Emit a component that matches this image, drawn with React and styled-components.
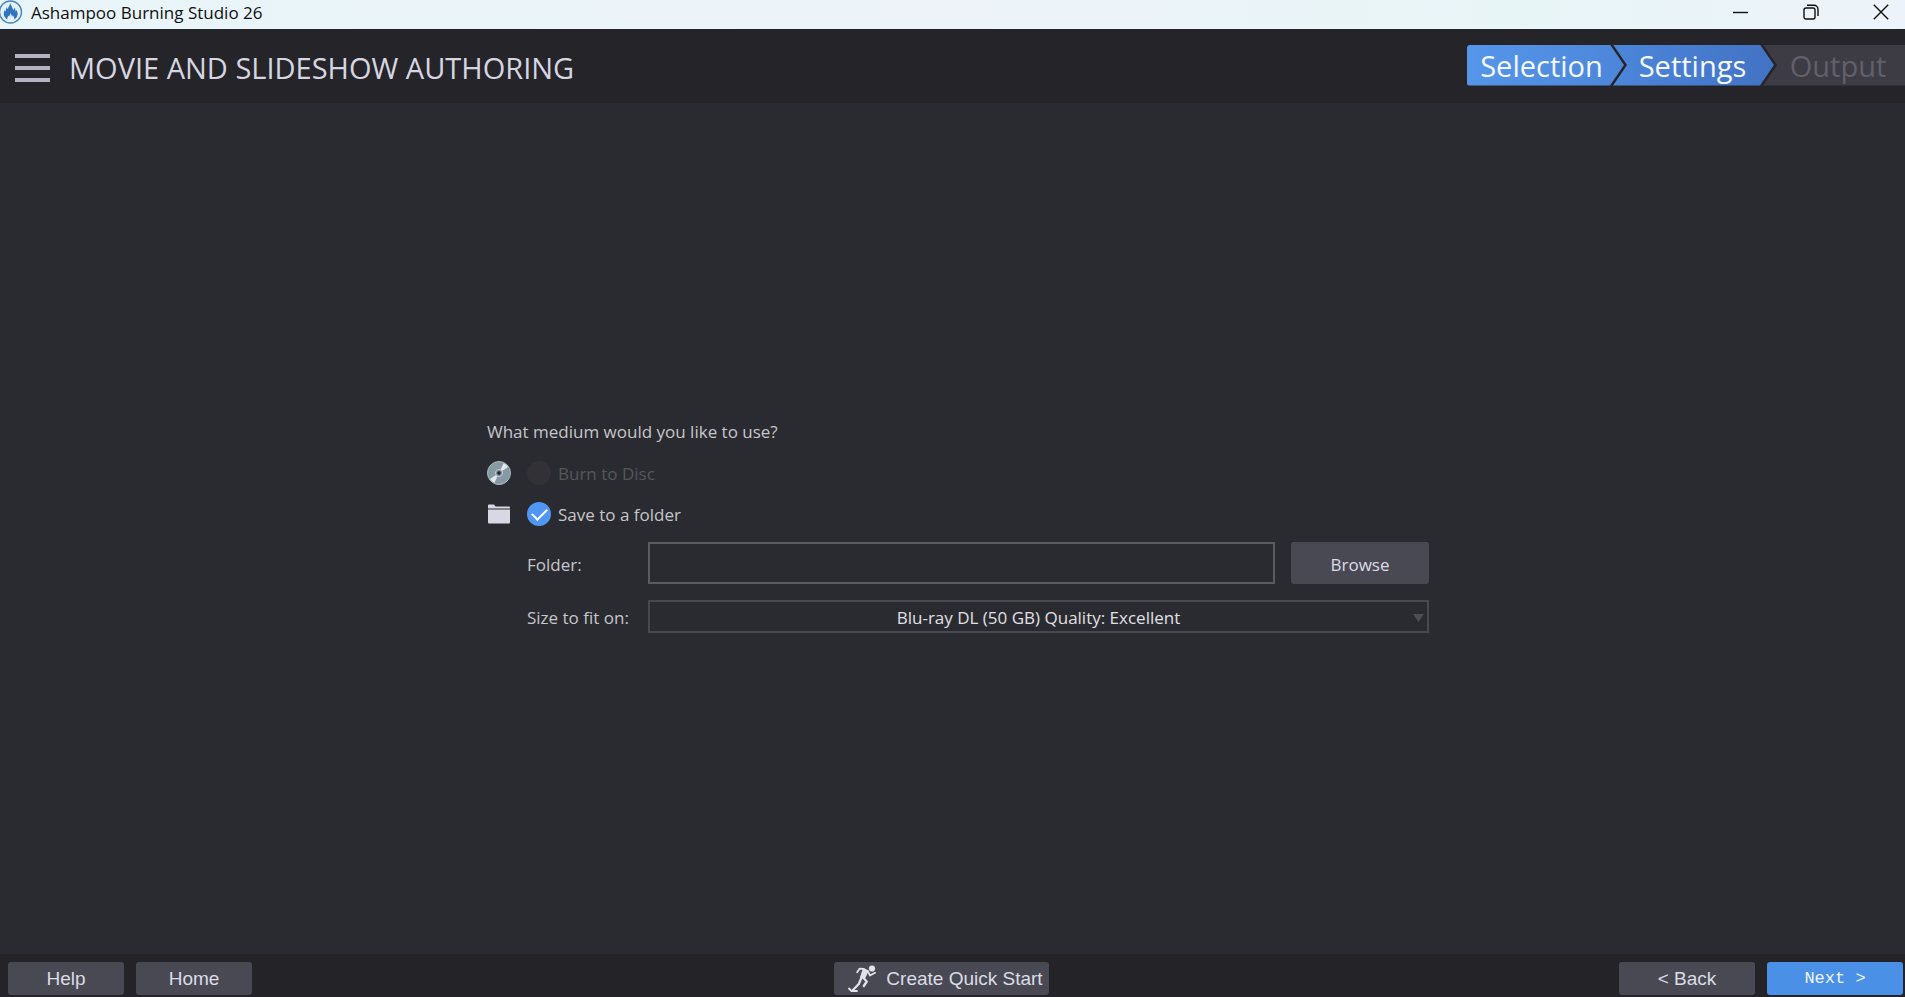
import React, { useState } from 'react';
import styled, { createGlobalStyle } from 'styled-components';

const App = () => {
  const [medium, setMedium] = useState('folder');
  const [folder, setFolder] = useState('');

  return (
    <Window>
      <GlobalStyle />
      <TitleBar>
        <AppName>
          <FlameLogo />
          <span>Ashampoo Burning Studio 26</span>
        </AppName>
        <WindowControls>
          <WindowButton aria-label="Minimize">
            <svg width="16" height="16" viewBox="0 0 16 16">
              <path d="M0 8.500h15" />
            </svg>
          </WindowButton>
          <WindowButton aria-label="Restore">
            <svg width="16" height="16" viewBox="0 0 16 16">
              <rect x="1" y="4" width="11" height="11" rx="2" />
              <path d="M4 1.200h7a4 4 0 0 1 4 4V12" />
            </svg>
          </WindowButton>
          <WindowButton aria-label="Close">
            <svg width="16" height="16" viewBox="0 0 16 16">
              <path d="M.8.8l14.400 14.400M15.200.8L.8 15.200" />
            </svg>
          </WindowButton>
        </WindowControls>
      </TitleBar>

      <Header>
        <MenuButton aria-label="Menu">
          <span />
          <span />
          <span />
        </MenuButton>
        <PageTitle>MOVIE AND SLIDESHOW AUTHORING</PageTitle>
        <Steps>
          <FirstStep>Selection</FirstStep>
          <MiddleStep>Settings</MiddleStep>
          <LastStep>Output</LastStep>
        </Steps>
      </Header>

      <Main>
        <Form onSubmit={(e) => e.preventDefault()}>
          <MediumGroup>
            <legend>What medium would you like to use?</legend>
            <MediumRow>
              <DiscIcon />
              <MediumLabel $disabled>
                <Radio
                  type="radio"
                  name="medium"
                  value="disc"
                  disabled
                  checked={medium === 'disc'}
                  onChange={() => setMedium('disc')}
                />
                <span>Burn to Disc</span>
              </MediumLabel>
            </MediumRow>
            <MediumRow>
              <FolderIcon />
              <MediumLabel>
                <Radio
                  type="radio"
                  name="medium"
                  value="folder"
                  checked={medium === 'folder'}
                  onChange={() => setMedium('folder')}
                />
                <span>Save to a folder</span>
              </MediumLabel>
            </MediumRow>
          </MediumGroup>

          <Fields>
            <FieldLabel htmlFor="folder">Folder:</FieldLabel>
            <FolderRow>
              <FolderInput id="folder" type="text" value={folder} onChange={(e) => setFolder(e.target.value)} />
              <BrowseButton type="button">Browse</BrowseButton>
            </FolderRow>
            <FieldLabel htmlFor="size">Size to fit on:</FieldLabel>
            <SelectWrap>
              <Select id="size">
                <option>Blu-ray DL (50 GB) Quality: Excellent</option>
              </Select>
              <svg width="11" height="8" viewBox="0 0 11 8">
                <path d="M0 0h11L5.500 8z" />
              </svg>
            </SelectWrap>
          </Fields>
        </Form>
      </Main>

      <Footer>
        <FooterLeft>
          <FooterButton>Help</FooterButton>
          <FooterButton>Home</FooterButton>
        </FooterLeft>
        <QuickStartButton>
          <RunnerIcon />
          Create Quick Start
        </QuickStartButton>
        <FooterRight>
          <StepButton>&lt; Back</StepButton>
          <NextButton>Next &gt;</NextButton>
        </FooterRight>
      </Footer>
    </Window>
  );
};

export default App;

const FlameLogo = () => (
  <svg width="23" height="24" viewBox="0 0 23 24">
    <circle cx="10.500" cy="12" r="11" fill="#e4f3fb" stroke="#4a86b8" strokeWidth="1.400" />
    <path
      d="M10.300 3c.4 2.600 2.400 4.200 2.900 7.200.7-.8 1.200-1.700 1.200-2.900.9 1.800 1 3 1.300 4.200.5-.4.7-.9.8-1.500 1 1.600 1.300 3.200 1.100 4.700-.3 2.200-1.600 3.700-3.300 4.700.1-1.700-.5-3-1.400-4.200-.2.700-.5 1.100-1 1.500-.2-1.500-.6-2.700-1.400-3.700-.3 1.800-1 2.500-1.300 3.600-.3-.3-.5-.7-.6-1.200-1 1.200-1.400 2.500-1.300 4-2-1-3.200-2.700-3.500-4.800-.2-1.600.2-3.200 1-4.700.2.700.4 1.200.9 1.600.2-1.700.4-3 1.100-4.400.2.800.5 1.500 1.100 2.100.2-2.400 2-3.700 2.400-6.200z"
      fill="#2f74bd"
    />
  </svg>
);

const DiscIcon = () => (
  <svg width="24" height="24" viewBox="0 0 24 24">
    <circle cx="12" cy="12" r="11.500" fill="#8799a3" stroke="#a9bac3" />
    <path d="M12 12L16.500 2.200A10.800 10.800 0 0 1 21 6z" fill="#dfe9ee" />
    <path d="M12 12L7.500 21.800A10.800 10.800 0 0 1 3 18z" fill="#dfe9ee" />
    <circle cx="12" cy="12" r="3.500" fill="#71838d" stroke="#c3d0d7" />
    <circle cx="12" cy="12" r="1.700" fill="#22262b" />
  </svg>
);

const FolderIcon = () => (
  <svg width="24" height="24" viewBox="0 0 24 24">
    <path d="M1 3.500a1 1 0 0 1 1-1h5l1.500 2H22a1 1 0 0 1 1 1v1H1z" fill="#d8d8e4" />
    <path d="M1 7.500h22v13a1 1 0 0 1-1 1H2a1 1 0 0 1-1-1z" fill="#d8d8e4" />
  </svg>
);

const RunnerIcon = () => (
  <svg width="28" height="28" viewBox="0 0 28 28" fill="none" stroke="#e2e2ea" strokeLinecap="round" strokeLinejoin="round">
    <circle cx="24" cy="3.500" r="3.100" fill="#e2e2ea" stroke="none" />
    <path d="M15.500 4l4.500 1.800-3.600 7.600-3.600-1.400z" fill="#e2e2ea" strokeWidth="1.400" />
    <path d="M16 4l-4.500-.3-2.300 3.600" strokeWidth="1.800" />
    <path d="M20 6.500l2 4 5-2.700" strokeWidth="1.800" />
    <path d="M15 12.500l3.800 4-3 4.500" strokeWidth="2.300" />
    <path d="M13.500 12.500l-2.700 6.500-5.800 6" strokeWidth="2.300" />
    <path d="M1 23.500l2.500 2.500h5.500" strokeWidth="1.800" />
  </svg>
);

const GlobalStyle = createGlobalStyle`
  * {
    box-sizing: border-box;
  }

  body {
    margin: 0;
    background: #2a2b30;
  }

  button, input, select {
    font: inherit;
    color: inherit;
    margin: 0;
  }

  svg {
    display: block;
    flex-shrink: 0;
  }
`;

const Window = styled.div`
  display: flex;
  flex-direction: column;
  min-height: 100vh;
  font-family: 'Open Sans', 'Noto Sans', sans-serif;
  font-size: 17px;
  color: #c6c6ca;
`;

const TitleBar = styled.div`
  display: flex;
  justify-content: space-between;
  height: 29px;
  background: linear-gradient(90deg, #e8f5f9, #edf3f9 50%, #e8f5f7 80%, #edf3fa);
  color: #101010;
`;

const AppName = styled.div`
  display: flex;
  gap: 8px;
  line-height: 25px;
`;

const WindowControls = styled.div`
  display: flex;
  padding-right: 16px;
`;

const WindowButton = styled.button`
  display: flex;
  justify-content: flex-end;
  align-items: center;
  width: 70px;
  height: 24px;
  padding: 0;
  border: none;
  background: none;

  svg {
    fill: none;
    stroke: #101010;
    stroke-width: 1.4;
  }
`;

const Header = styled.header`
  display: flex;
  align-items: center;
  height: 74px;
  padding: 4px 0 0 15px;
  background: #252429;
`;

const MenuButton = styled.button`
  display: flex;
  flex-direction: column;
  gap: 8px;
  width: 35px;
  padding: 0;
  border: none;
  background: none;

  span {
    height: 4px;
    background: #b4b3bf;
  }
`;

const PageTitle = styled.h1`
  flex: 1;
  margin: 0 0 0 19px;
  font-size: 29px;
  font-weight: 400;
  line-height: 40px;
  color: #d6d6e2;
`;

const Steps = styled.ol`
  display: flex;
  margin: 0 0 6px;
  padding: 0;
  list-style: none;
  font-size: 29px;
  line-height: 41px;
  color: #f4f8fd;
`;

const Step = styled.li`
  height: 41px;
  text-align: center;
`;

const FirstStep = styled(Step)`
  width: 157px;
  padding-right: 8px;
  border-radius: 3px 0 0 3px;
  background: linear-gradient(90deg, #5596ea, #4c86da);
  clip-path: polygon(0 0, calc(100% - 14px) 0, 100% 50%, calc(100% - 14px) 100%, 0 100%);
`;

const MiddleStep = styled(Step)`
  width: 161px;
  margin-left: -11px;
  padding-right: 2px;
  background: linear-gradient(90deg, #4c86da, #4272c4);
  clip-path: polygon(0 0, calc(100% - 14px) 0, 100% 50%, calc(100% - 14px) 100%, 0 100%, 14px 50%);
`;

const LastStep = styled(Step)`
  width: 142px;
  margin-left: -11px;
  padding-left: 8px;
  background: #3d3c45;
  color: #615f6b;
  clip-path: polygon(0 0, 100% 0, 100% 100%, 0 100%, 14px 50%);
`;

const Main = styled.main`
  display: flex;
  flex: 1;
  justify-content: center;
  align-items: center;
  padding: 0 0 4px 11px;
`;

const Form = styled.form`
  width: 50%;
  min-width: 760px;
  max-width: 942px;
`;

const MediumGroup = styled.fieldset`
  margin: 0;
  padding: 0;
  border: none;

  legend {
    padding: 0;
    line-height: 24px;
  }
`;

const MediumRow = styled.div`
  display: flex;
  align-items: center;
  gap: 16px;
  height: 24px;
  margin-top: 17px;
`;

const MediumLabel = styled.label`
  display: flex;
  align-items: center;
  gap: 7px;
  line-height: 24px;
  color: ${(props) => (props.$disabled ? '#56565b' : '#c6c6ca')};

  span {
    padding-top: 2px;
  }
`;

const Radio = styled.input`
  display: grid;
  place-items: center;
  width: 24px;
  height: 24px;
  appearance: none;
  border-radius: 50%;
  background: #323136;

  &:checked {
    background: #5097f3;
  }

  &:checked::after {
    content: '';
    width: 13px;
    height: 7px;
    margin-bottom: 4px;
    border-left: 2px solid #fff;
    border-bottom: 2px solid #fff;
    transform: rotate(-45deg);
  }
`;

const Fields = styled.div`
  display: grid;
  grid-template-columns: 121px 1fr;
  align-items: center;
  row-gap: 16px;
  margin-top: 16px;
  padding-left: 40px;
`;

const FieldLabel = styled.label`
  padding-top: 3px;
  line-height: 24px;
`;

const FolderRow = styled.div`
  display: flex;
  gap: 16px;
`;

const FolderInput = styled.input`
  flex: 1;
  min-width: 0;
  height: 42px;
  padding: 0 8px;
  border: 2px solid #5c5c60;
  background: transparent;
  outline: none;
`;

const Button = styled.button`
  height: 33px;
  padding: 0;
  border: none;
  border-radius: 3px;
  background: #494953;
  color: #dcdce6;
`;

const BrowseButton = styled(Button)`
  width: 138px;
  height: 42px;
  padding-top: 2px;
`;

const SelectWrap = styled.div`
  position: relative;

  svg {
    position: absolute;
    top: 14px;
    right: 5px;
    fill: #4d4d52;
    pointer-events: none;
  }
`;

const Select = styled.select`
  display: block;
  width: 100%;
  height: 33px;
  padding: 2px 0 0;
  appearance: none;
  border: 2px solid #48484e;
  border-radius: 0;
  background: transparent;
  color: #e0e0e4;
  text-align: center;
  text-align-last: center;
`;

const Footer = styled.footer`
  display: flex;
  justify-content: space-between;
  height: 43px;
  padding: 8px 2px 0 8px;
  background: #242328;
  font-family: 'Liberation Sans', Arial, sans-serif;
  font-size: 19px;
`;

const FooterButton = styled(Button)`
  width: 116px;
`;

const FooterLeft = styled.div`
  display: flex;

  button {
    margin-right: 12px;
  }
`;

const QuickStartButton = styled(Button)`
  display: flex;
  align-items: center;
  gap: 10px;
  padding: 0 6px 0 14px;
`;

const FooterRight = styled.div`
  display: flex;
  gap: 12px;
`;

const StepButton = styled(Button)`
  width: 136px;
`;

const NextButton = styled(StepButton)`
  background: #4a90e6;
  color: #f0f5fc;
  font-family: 'Liberation Mono', 'Courier New', monospace;
  font-size: 17px;
`;
